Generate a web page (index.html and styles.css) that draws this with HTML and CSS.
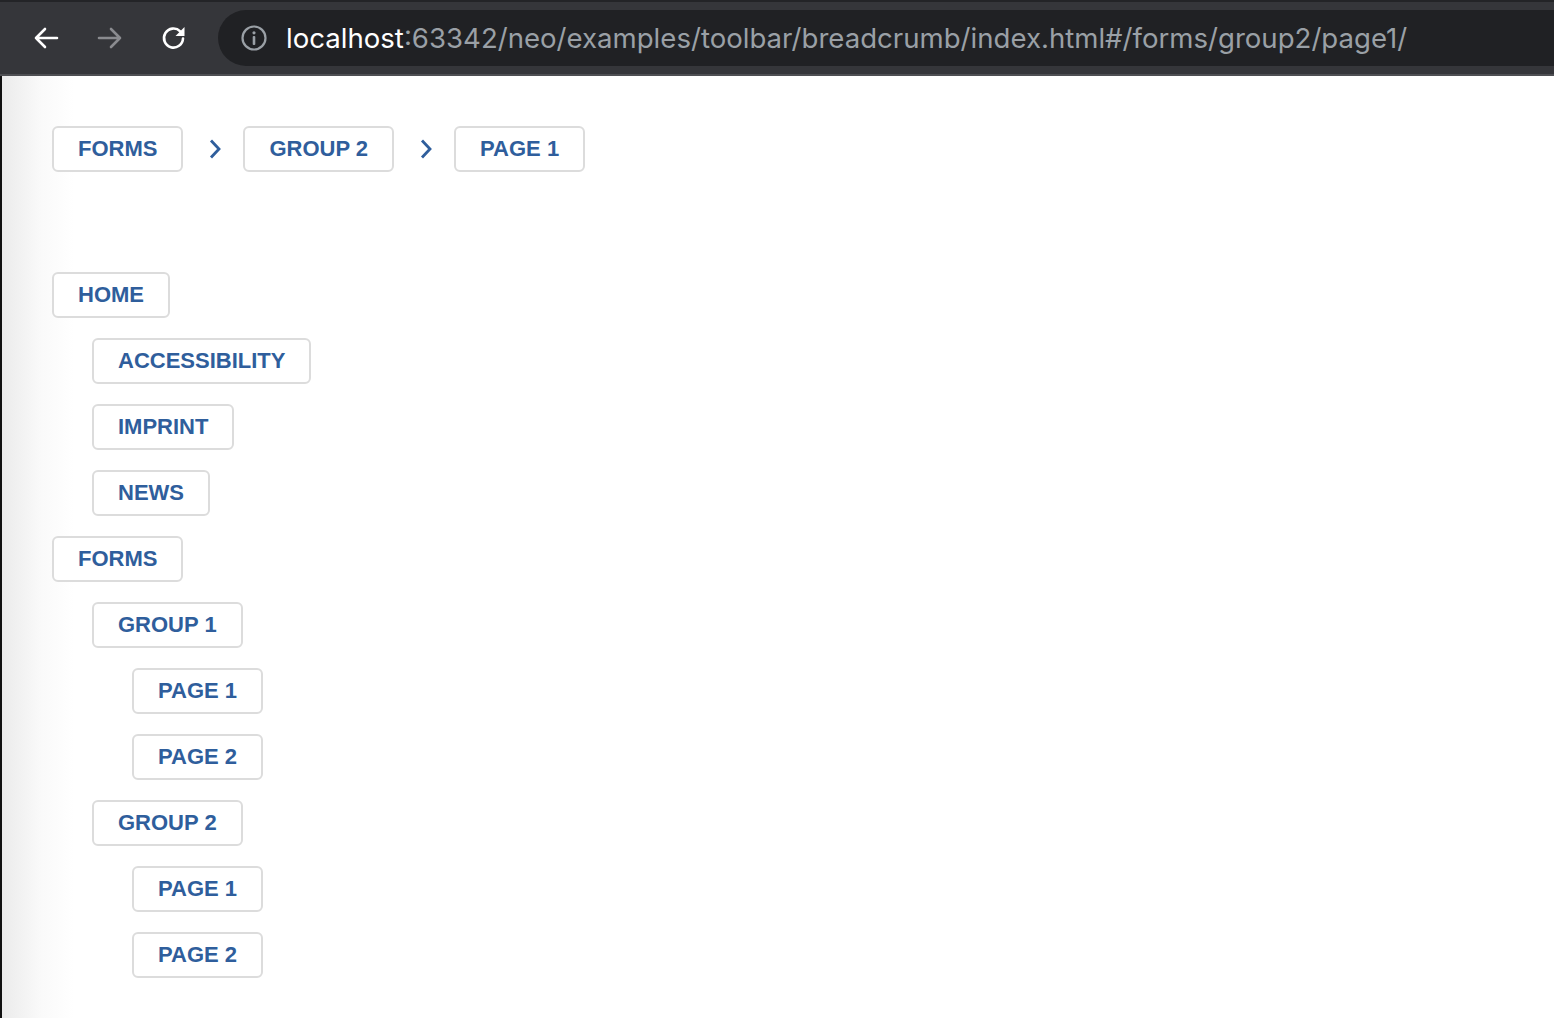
FILE: index.html
```html
<!DOCTYPE html>
<html lang="en">
<head>
    <meta charset="UTF-8">
    <meta name="viewport" content="width=device-width, initial-scale=1.0">
    <title>Breadcrumb</title>
    <link rel="stylesheet" href="styles.css">
</head>
<body>
    <!-- browser toolbar -->
    <div class="toolbar">
        <div class="nav-btn">
            <svg width="28" height="28" viewBox="0 0 28 28"><path d="M25 14H4M13 5l-9 9 9 9" fill="none" stroke="#fff" stroke-width="2.6" stroke-linecap="round" stroke-linejoin="round"/></svg>
        </div>
        <div class="nav-btn">
            <svg width="28" height="28" viewBox="0 0 28 28"><path d="M3 14h21M15 5l9 9-9 9" fill="none" stroke="#8a8b8f" stroke-width="2.6" stroke-linecap="round" stroke-linejoin="round"/></svg>
        </div>
        <div class="nav-btn">
            <svg width="28" height="28" viewBox="0 0 28 28"><path d="M23 14.5A9.5 9.5 0 1 1 20.2 7.3" fill="none" stroke="#fff" stroke-width="2.6" stroke-linecap="round"/><path d="M24.5 3v9h-9z" fill="#fff"/></svg>
        </div>
        <div class="address">
            <svg class="info" width="28" height="28" viewBox="0 0 28 28"><circle cx="14" cy="14" r="11.5" fill="none" stroke="#9aa0a6" stroke-width="2.2"/><circle cx="14" cy="8.8" r="1.6" fill="#9aa0a6"/><rect x="12.7" y="12" width="2.6" height="9" rx="1" fill="#9aa0a6"/></svg>
            <span class="host">localhost</span><span class="path">:63342/neo/examples/toolbar/breadcrumb/index.html#/forms/group2/page1/</span>
        </div>
    </div>

    <div class="page">
        <nav class="breadcrumb">
            <a class="crumb">FORMS</a>
            <span class="sep"><svg width="16" height="22" viewBox="0 0 16 22"><path d="M4 2.5l8 8.5-8 8.5" fill="none" stroke="#2f5e9c" stroke-width="2.8"/></svg></span>
            <a class="crumb">GROUP 2</a>
            <span class="sep"><svg width="16" height="22" viewBox="0 0 16 22"><path d="M4 2.5l8 8.5-8 8.5" fill="none" stroke="#2f5e9c" stroke-width="2.8"/></svg></span>
            <a class="crumb">PAGE 1</a>
        </nav>

        <ul class="tree">
            <li><a class="crumb">HOME</a>
                <ul>
                    <li><a class="crumb">ACCESSIBILITY</a></li>
                    <li><a class="crumb">IMPRINT</a></li>
                    <li><a class="crumb">NEWS</a></li>
                </ul>
            </li>
            <li><a class="crumb">FORMS</a>
                <ul>
                    <li><a class="crumb">GROUP 1</a>
                        <ul>
                            <li><a class="crumb">PAGE 1</a></li>
                            <li><a class="crumb">PAGE 2</a></li>
                        </ul>
                    </li>
                    <li><a class="crumb">GROUP 2</a>
                        <ul>
                            <li><a class="crumb">PAGE 1</a></li>
                            <li><a class="crumb">PAGE 2</a></li>
                        </ul>
                    </li>
                </ul>
            </li>
        </ul>
    </div>
</body>
</html>
```

FILE: styles.css
```css
:root {
    --crumb-color: #2f5e9c;
    --crumb-border: #dcdcdc;
}

html, body {
    margin: 0;
    height: 100%;
}

body {
    font-family: 'Liberation Sans', Arial, sans-serif;
    background: #fff;
    display: flex;
    flex-direction: column;
    overflow: hidden;
}

.toolbar {
    height: 72px;
    flex-shrink: 0;
    background: #35363a;
    border-top: 2px solid #232427;
    border-bottom: 2px solid #4e4f53;
    display: flex;
    align-items: center;
    padding-left: 32px;
}

.nav-btn {
    width: 28px;
    height: 28px;
    margin-right: 36px;
    display: flex;
}

.nav-btn:nth-child(3) {
    margin-right: 30px;
}

.address {
    flex: 1;
    height: 56px;
    background: #202124;
    border-radius: 28px 0 0 28px;
    display: flex;
    align-items: center;
    padding-left: 22px;
    font-family: Inter, 'Liberation Sans', sans-serif;
    font-size: 27.6px;
    white-space: nowrap;
}

.info {
    margin-right: 18px;
}

.host {
    color: #fff;
}

.path {
    color: #9aa0a6;
}

.page {
    flex: 1;
    border-left: 2px solid #111;
    background: linear-gradient(to right, #ebebeb, #fafafa 40px, #fff 72px);
    padding: 50px 0 0 50px;
}

.crumb {
    display: inline-flex;
    align-items: center;
    box-sizing: border-box;
    height: 46px;
    padding: 0 24px;
    border: 2px solid var(--crumb-border);
    border-radius: 6px;
    background: #fff;
    color: var(--crumb-color);
    font-size: 22px;
    font-weight: bold;
    cursor: pointer;
}

.breadcrumb {
    display: flex;
    align-items: center;
}

.sep {
    width: 60px;
    display: flex;
    justify-content: center;
    padding-left: 4px;
    box-sizing: border-box;
}

.tree, .tree ul {
    list-style: none;
    margin: 0;
    padding: 0;
}

.tree {
    margin-top: 100px;
}

.tree ul {
    padding-left: 40px;
}

.tree li {
    margin-top: 20px;
}

.tree > li:first-child {
    margin-top: 0;
}
```
